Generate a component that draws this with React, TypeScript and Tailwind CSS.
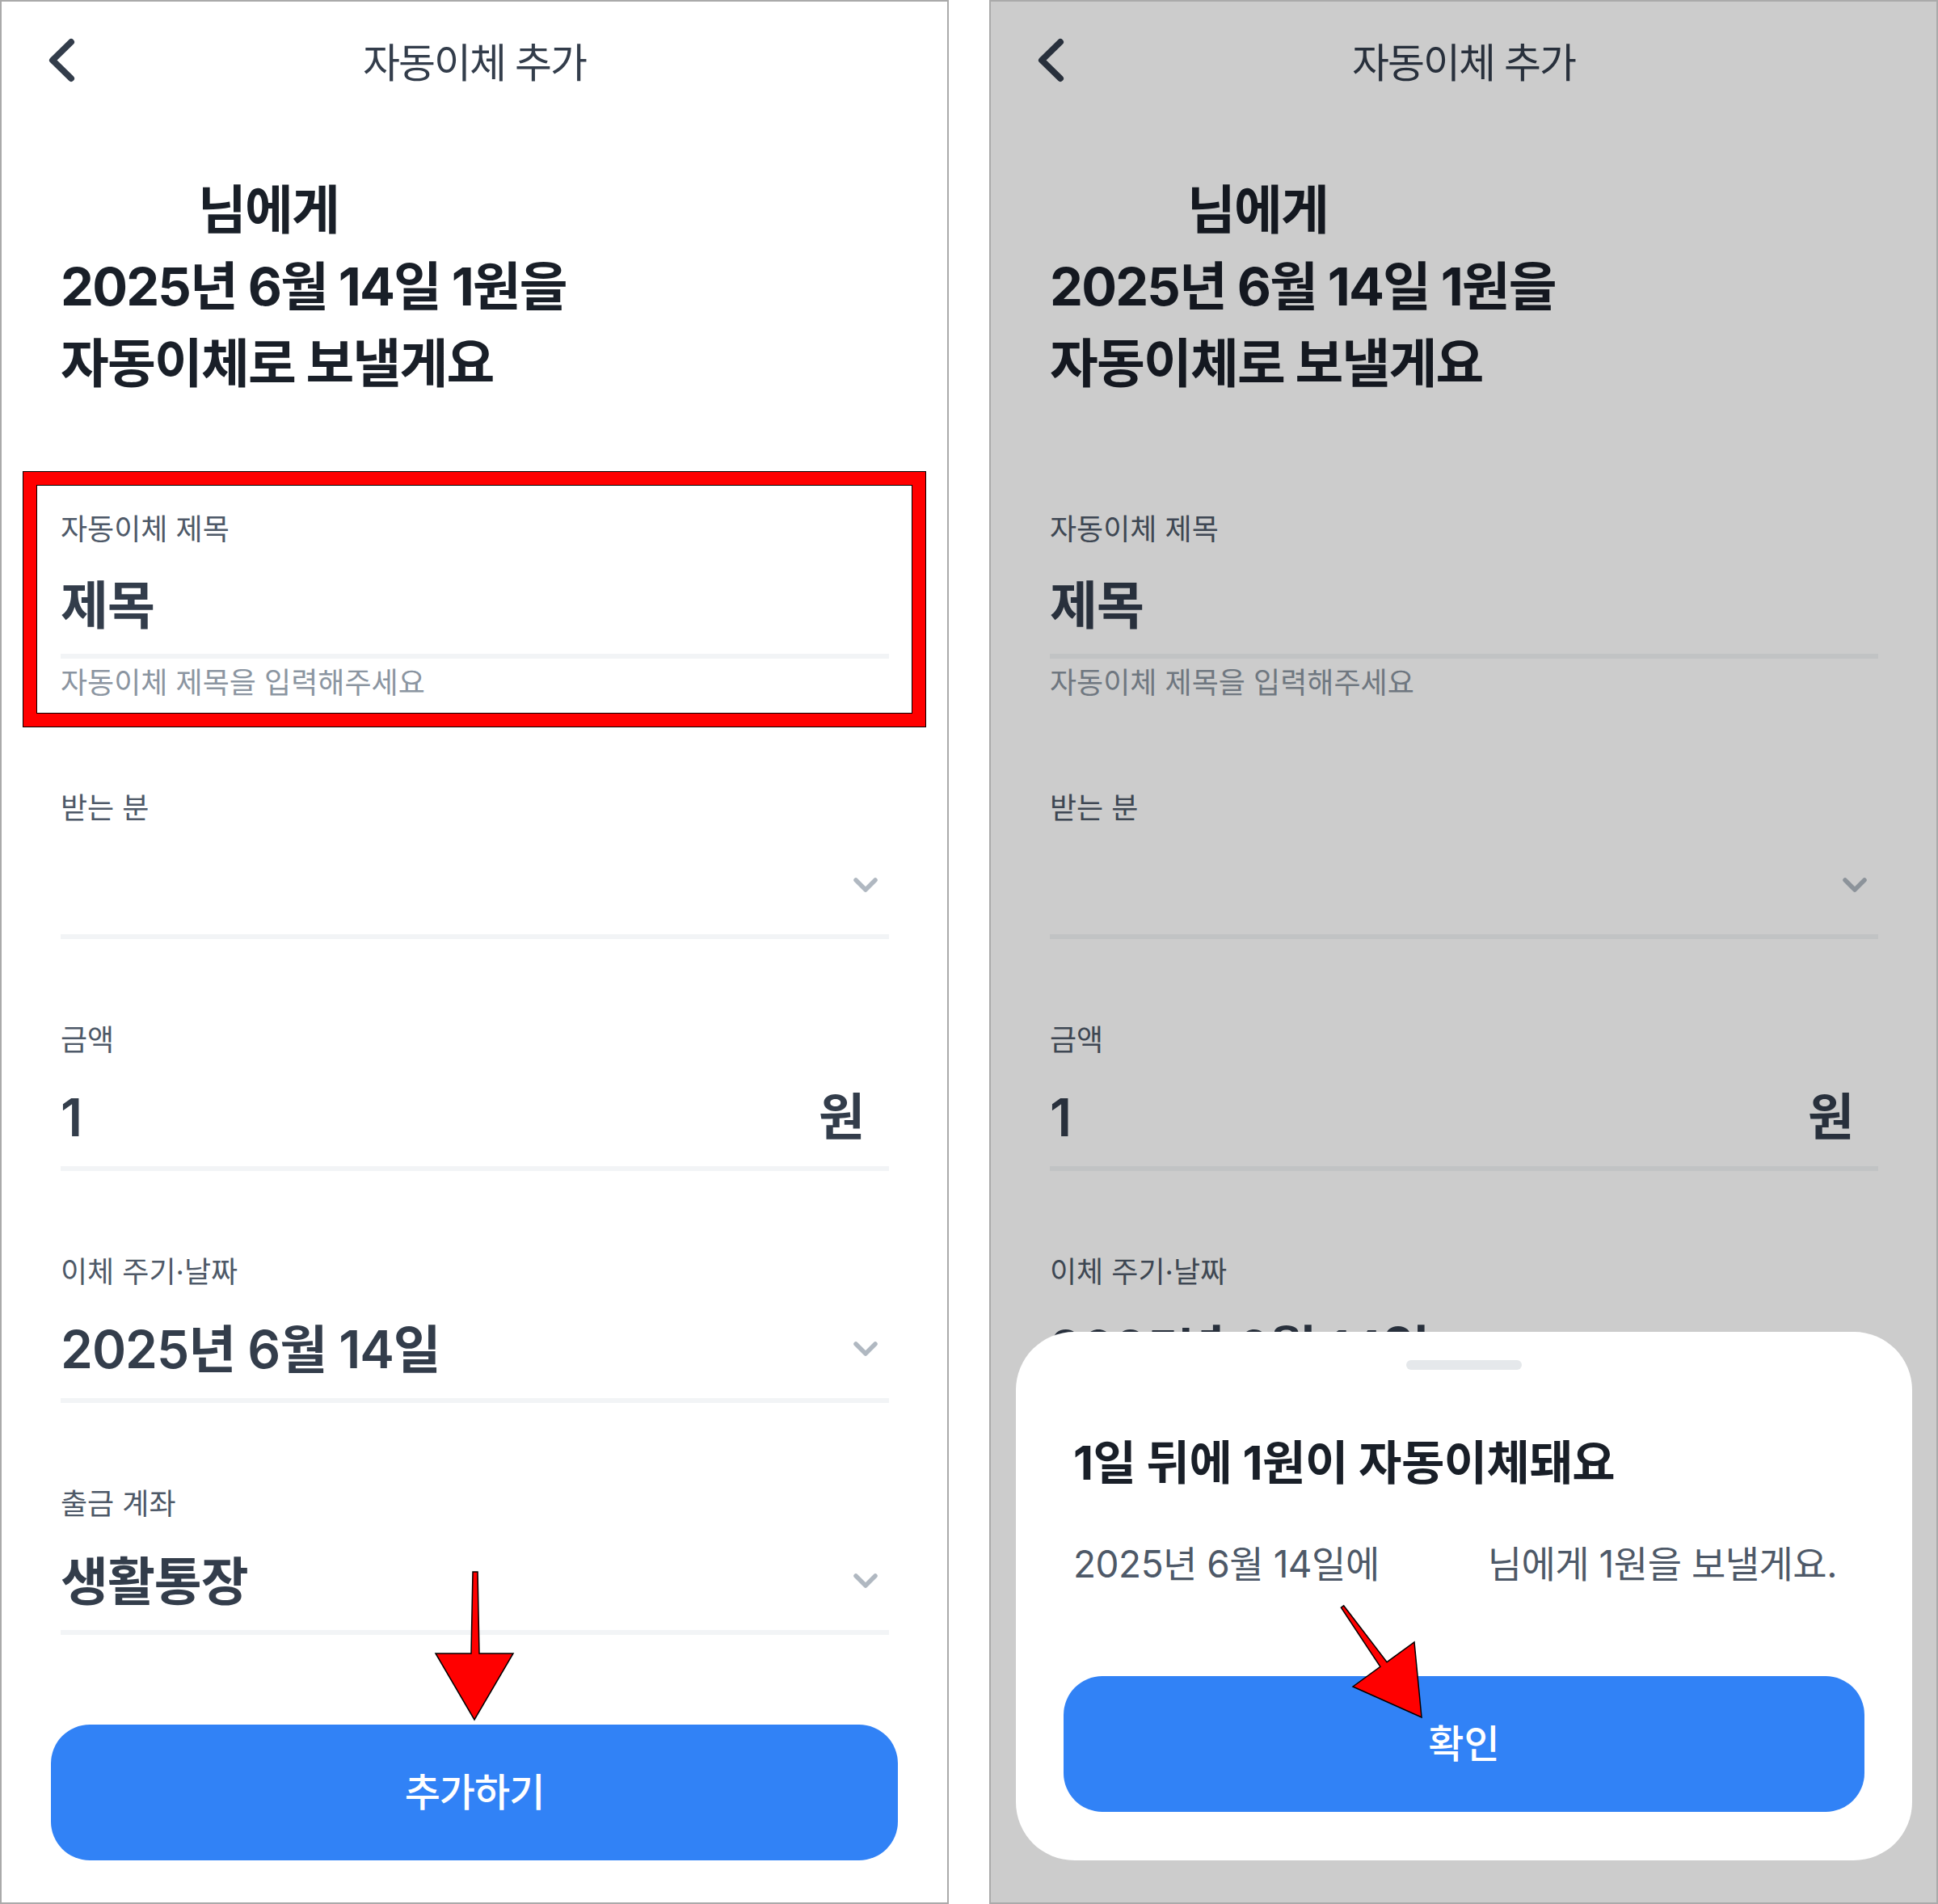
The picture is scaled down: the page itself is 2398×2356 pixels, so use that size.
import React from "react";

function BackChevron() {
  return (
    <svg className="ml-[56px]" width="40" height="60" viewBox="0 0 40 60" fill="none">
      <path d="M30 7 L7 29.5 L30 52" stroke="#333d4b" strokeWidth="8" strokeLinecap="round" strokeLinejoin="round" />
    </svg>
  );
}

function SmallChevron() {
  return (
    <svg className="mr-[14px]" width="30" height="20" viewBox="0 0 30 20" fill="none">
      <path d="M3 3 L15 15 L27 3" stroke="#b0b8c1" strokeWidth="5.5" strokeLinecap="round" strokeLinejoin="round" />
    </svg>
  );
}

function Field({
  label,
  value,
  right,
  className,
  valueGap = "mt-[24px]",
  helper,
}: {
  label: string;
  value?: string;
  right?: React.ReactNode;
  className?: string;
  valueGap?: string;
  helper?: string;
}) {
  return (
    <div className={className}>
      <div className="h-[48px] text-[36px] leading-[48px] text-[#4e5968]">{label}</div>
      <div className={`${valueGap} flex h-[96px] items-center justify-between`}>
        <span className="text-[64px] font-semibold leading-[96px] tracking-[-1px] text-[#333d4b]">{value}</span>
        {right}
      </div>
      <div className="mt-[12px] h-[6px] bg-[#f2f4f6]" />
      {helper && (
        <div className="mt-[8px] h-[44px] text-[36px] leading-[44px] text-[#8b95a1]">{helper}</div>
      )}
    </div>
  );
}

function Page() {
  return (
    <div className="flex h-full w-full flex-col bg-white">
      <header className="grid h-[146px] grid-cols-[1fr_auto_1fr] items-center">
        <BackChevron />
        <h1 className="mt-[6px] text-[50px] leading-none tracking-[-2px] text-[#333d4b]">자동이체 추가</h1>
        <div />
      </header>
      <div className="mt-[64px] pl-[73px] text-[65px] font-bold leading-[95px] tracking-[-1.8px] text-[#191f28]">
        <p className="pl-[170px]">님에게</p>
        <p>2025년 6월 14일 1원을</p>
        <p>자동이체로 보낼게요</p>
      </div>
      <div className="mt-[134px] pl-[73px] pr-[72px]">
        <Field label="자동이체 제목" value="제목" valueGap="mt-[22px]" helper="자동이체 제목을 입력해주세요" />
        <Field className="mt-[109px]" label="받는 분" value="" right={<SmallChevron />} />
        <Field
          className="mt-[101px]"
          label="금액"
          value="1"
          right={
            <span className="mr-[30px] text-[62px] font-semibold leading-[96px] text-[#333d4b]">원</span>
          }
        />
        <Field className="mt-[101px]" label="이체 주기·날짜" value="2025년 6월 14일" right={<SmallChevron />} />
        <Field className="mt-[101px]" label="출금 계좌" value="생활통장" right={<SmallChevron />} />
      </div>
      <button className="mx-[61px] mt-[111px] h-[168px] rounded-[48px] bg-[#3182f6] text-[48px] font-medium tracking-[-1px] text-white">
        추가하기
      </button>
    </div>
  );
}

export default function App() {
  return (
    <div className="flex h-[2356px] w-[2398px] gap-[50px] bg-white font-['Inter','Noto_Sans_CJK_KR',sans-serif]">
      {/* Left panel */}
      <div className="relative h-[2356px] w-[1174px] overflow-hidden border-2 border-[#aaaaaa]">
        <Page />
        <div className="pointer-events-none absolute left-[27px] top-[582px] h-[315px] w-[1116px] border-[16px] border-[#ff0000] shadow-[0_0_0_1px_#000,inset_0_0_0_1px_#000]" />
        <svg className="pointer-events-none absolute inset-0 h-full w-full" viewBox="0 0 1170 2352">
          <polygon
            points="583,1943 589,1943 591,2044 633,2044 585,2126 537,2044 581,2044"
            fill="#ff0000"
            stroke="#000"
            strokeWidth="1.5"
          />
        </svg>
      </div>

      {/* Right panel */}
      <div className="relative h-[2356px] w-[1174px] overflow-hidden border-2 border-[#aaaaaa]">
        <Page />
        <div className="absolute inset-0 bg-black/20" />
        <div className="absolute bottom-[52px] left-[31px] right-[30px] flex h-[654px] flex-col rounded-[72px] bg-white px-[59px] pt-[35px]">
          <div className="mx-auto h-[12px] w-[143px] rounded-full bg-[#e5e8eb]" />
          <h2 className="mt-[79px] whitespace-nowrap pl-[12px] text-[58px] font-bold leading-[72px] tracking-[-0.5px] text-[#191f28]">
            1일 뒤에 1원이 자동이체돼요
          </h2>
          <p className="mt-[59px] whitespace-nowrap pl-[12px] text-[46px] leading-[60px] tracking-[-0.5px] text-[#4e5968]">
            2025년 6월 14일에
            <span className="inline-block w-[134px]" />
            님에게 1원을 보낼게요.
          </p>
          <button className="mt-[109px] h-[168px] w-full rounded-[48px] bg-[#3182f6] text-[48px] font-medium text-white">
            확인
          </button>
        </div>
        <svg className="pointer-events-none absolute inset-0 h-full w-full" viewBox="0 0 1170 2352">
          <polygon
            points="436.6,1984.8 490.1,2054.6 524,2030 533,2123 448,2085 481.9,2060.4 433.4,1987.2"
            fill="#ff0000"
            stroke="#000"
            strokeWidth="1.5"
          />
        </svg>
      </div>
    </div>
  );
}
